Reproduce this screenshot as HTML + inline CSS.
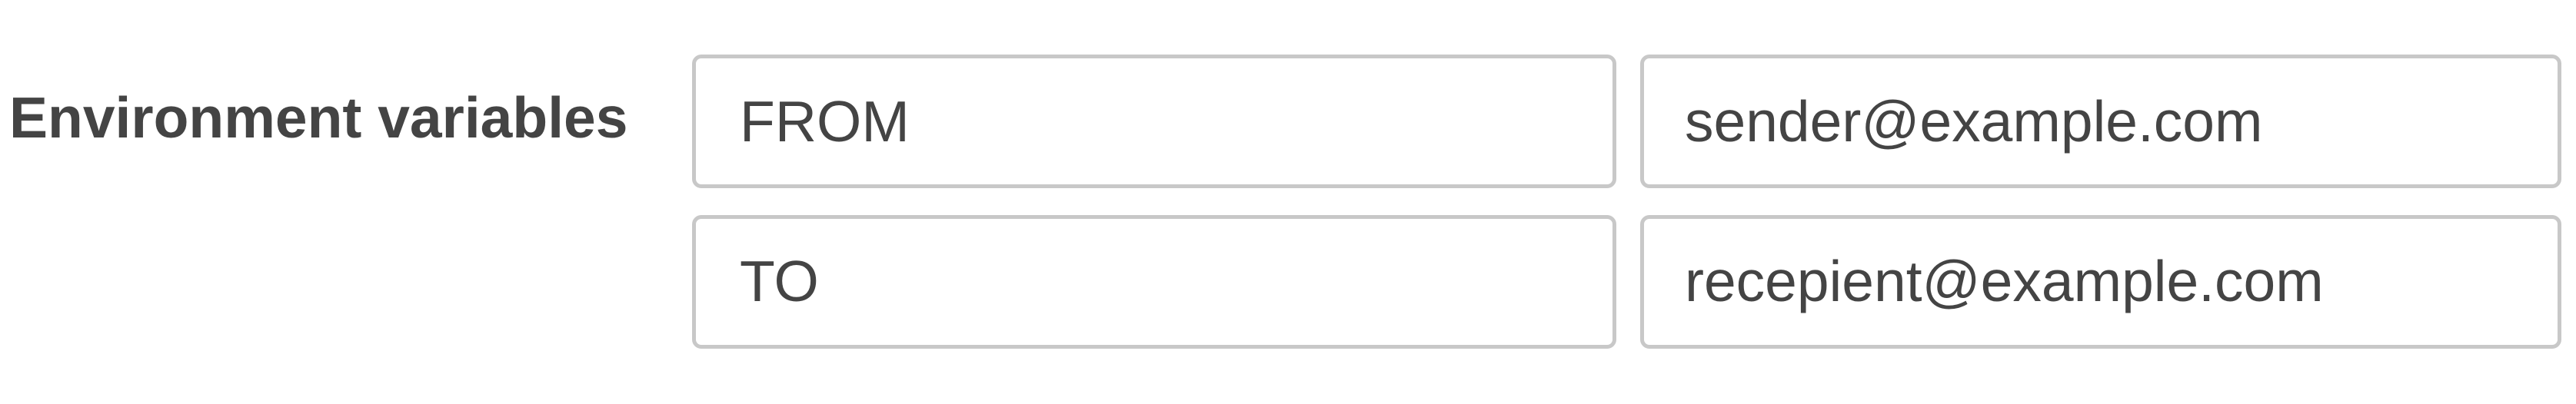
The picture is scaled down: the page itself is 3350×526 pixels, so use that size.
<!DOCTYPE html>
<html><head><meta charset="utf-8"><style>
html,body{margin:0;padding:0;background:#fff;width:3350px;height:526px;overflow:hidden}
body{font-family:"Liberation Sans",Arial,sans-serif;color:#444}
.lbl{position:absolute;left:12px;top:153px;font-weight:bold;font-size:75px;line-height:0;white-space:nowrap}
.box{position:absolute;box-sizing:border-box;border:5px solid #c8c8c8;border-radius:12px;background:#fff}
.t{position:absolute;font-size:75px;line-height:0;white-space:nowrap}
</style></head><body>
<div class="lbl">Environment variables</div>
<div class="box" style="left:900px;top:71px;width:1202px;height:174px"></div>
<div class="box" style="left:2133px;top:71px;width:1198px;height:174px"></div>
<div class="box" style="left:900px;top:280px;width:1202px;height:174px"></div>
<div class="box" style="left:2133px;top:280px;width:1198px;height:174px"></div>
<div class="t" style="left:962px;top:158px">FROM</div>
<div class="t" style="left:2191px;top:158px">sender@example.com</div>
<div class="t" style="left:962px;top:366px">TO</div>
<div class="t" style="left:2191px;top:366px">recepient@example.com</div>
</body></html>
